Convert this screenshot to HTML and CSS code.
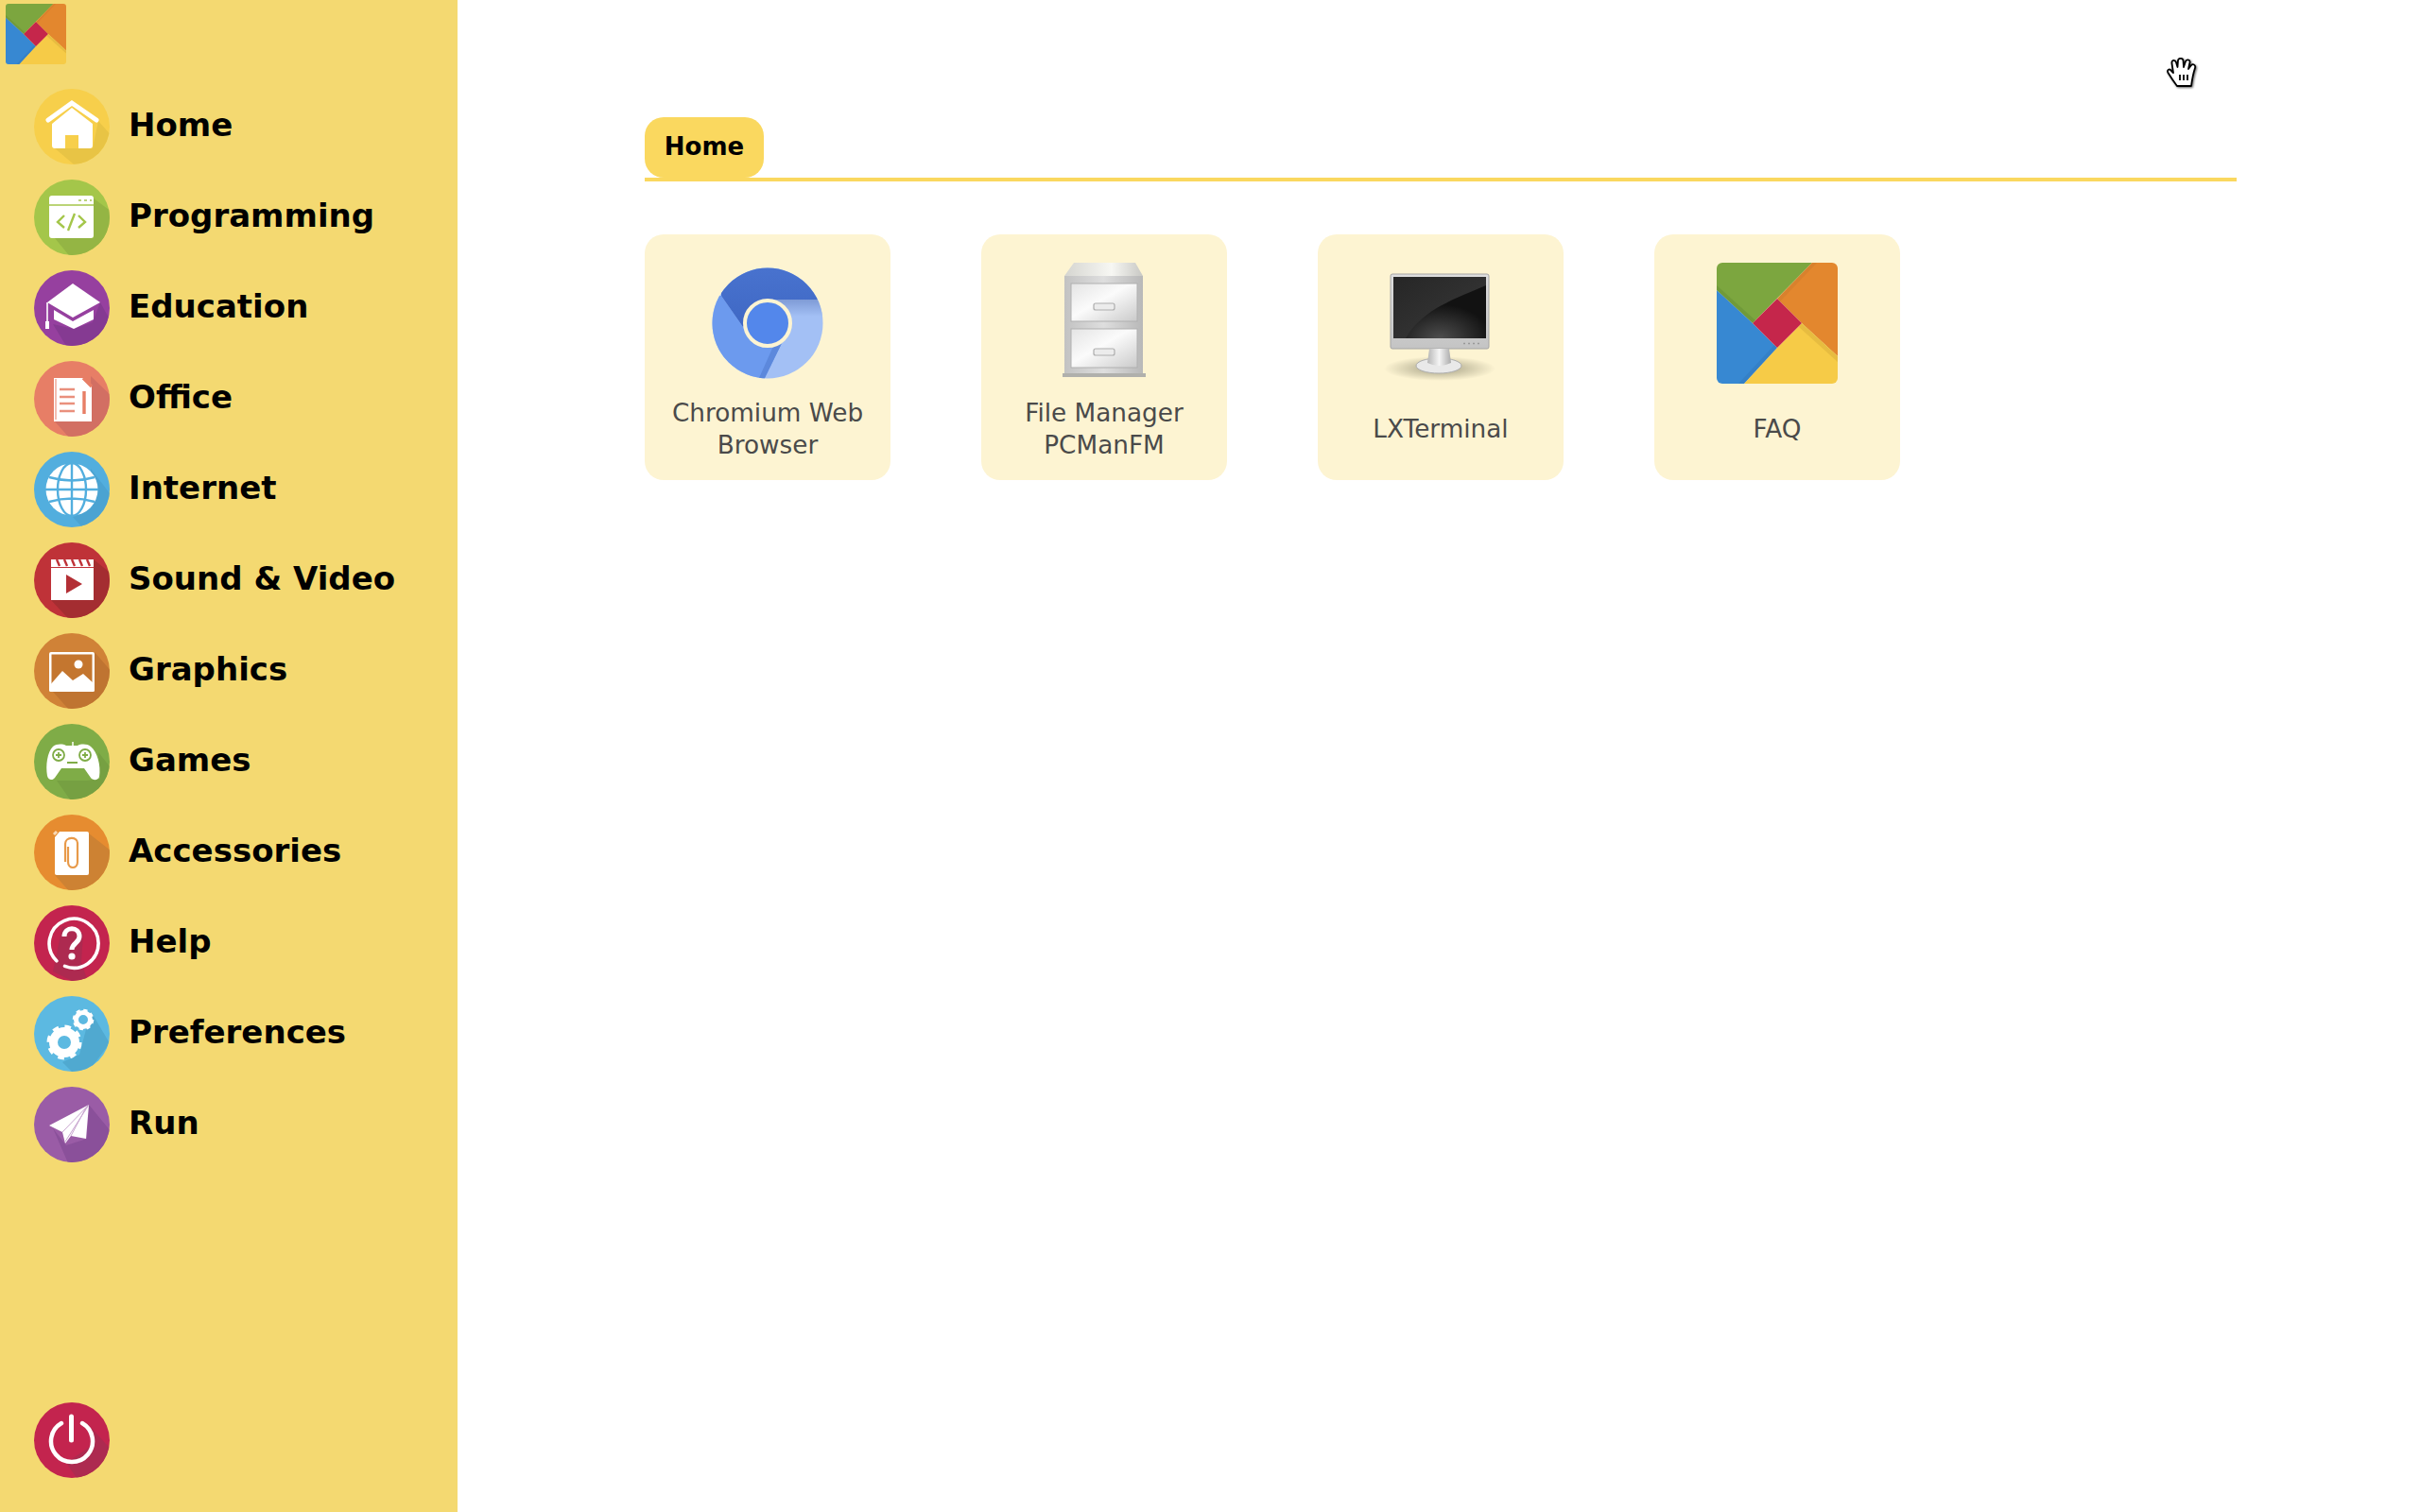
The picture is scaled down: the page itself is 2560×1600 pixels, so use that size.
FILE: index.html
```html
<!DOCTYPE html>
<html lang="en">
<head>
  <meta charset="UTF-8">
  <title>Menu</title>
  <link rel="stylesheet" href="styles.css">
</head>
<body>
  <aside class="sidebar">
    <svg class="logo" viewBox="0 0 128 128">
      <defs>
        <clipPath id="disc"><circle cx="40" cy="40" r="40"/></clipPath>
        <clipPath id="tile"><rect width="128" height="128" rx="6"/></clipPath>
        <clipPath id="round"><circle cx="64" cy="64" r="58.5"/></clipPath>
        <g id="tiles" clip-path="url(#tile)">
          <polygon points="0,0 101,0 38,64 0,29" fill="#7ca63f"/>
          <polygon points="101,0 128,0 128,99 90,64 64,38" fill="#e3872e"/>
          <polygon points="0,29 38,64 64,90 29,128 0,128" fill="#3788d2"/>
          <polygon points="29,128 64,90 90,64 128,99 128,128" fill="#f6cb47"/>
          <polygon points="64,38 90,64 64,90 38,64" fill="#c5264b"/>
          <polygon points="0,29 38,64 41,61 0,24" fill="#5f8a35" opacity=".4"/>
          <polygon points="64,38 101,0 106,0 67,41" fill="#c9792c" opacity=".4"/>
          <polygon points="64,90 29,128 23,128 61,87" fill="#2f76b6" opacity=".4"/>
          <polygon points="90,64 128,99 128,105 87,68" fill="#d8ad3a" opacity=".5"/>
        </g>
      </defs>
      <use href="#tiles"/>
    </svg>

    <nav class="menu">
      <a class="menu-item">
        <svg class="disc" viewBox="0 0 80 80">
          <circle cx="40" cy="40" r="40" fill="#f7cf4b"/>
          <polygon points="68,34 62,63 22,63 54,90 100,70" fill="#e8c445" clip-path="url(#disc)"/>
          <path d="M40 20 L62 37 V60 Q62 63 59 63 H47 V49 H33 V63 H22 Q19 63 19 60 V37 Z" fill="#fff"/>
          <path d="M15 33 L40 15 L66 33" fill="none" stroke="#fff" stroke-width="5" stroke-linecap="round"/>
        </svg>
        <span>Home</span>
      </a>
      <a class="menu-item">
        <svg class="disc" viewBox="0 0 80 80">
          <circle cx="40" cy="40" r="40" fill="#a4c64a"/>
          <polygon points="63,20 63,62 22,62 45,90 100,70 90,40" fill="#94b544" clip-path="url(#disc)"/>
          <rect x="16" y="17" width="47" height="45" rx="3" fill="#fff"/>
          <path d="M16 27 H63" stroke="#a4c64a" stroke-width="1.5"/>
          <path d="M47 22 H50 M53 22 H56 M59 22 H61" stroke="#bcd37e" stroke-width="2"/>
          <path d="M32 38 L25 45 L32 51 M47 38 L54 45 L47 51 M43 36 L36 54" fill="none" stroke="#a4c64a" stroke-width="2.4"/>
        </svg>
        <span>Programming</span>
      </a>
      <a class="menu-item">
        <svg class="disc" viewBox="0 0 80 80">
          <circle cx="40" cy="40" r="40" fill="#96409f"/>
          <polygon points="70,34 62,55 42,62 20,57 40,90 90,70" fill="#853a92" clip-path="url(#disc)"/>
          <polygon points="41,14 70,34 41,50 14,34" fill="#fff"/>
          <polygon points="21,42 41,54 63,42 63,52 42,62 21,52" fill="#fff"/>
          <path d="M14 34 V56" stroke="#fff" stroke-width="1.6"/>
          <rect x="12" y="54" width="4" height="8" fill="#fff"/>
        </svg>
        <span>Education</span>
      </a>
      <a class="menu-item">
        <svg class="disc" viewBox="0 0 80 80">
          <circle cx="40" cy="40" r="40" fill="#e77e66"/>
          <polygon points="60,16 61,64 22,64 45,90 100,70 90,45" fill="#d26f63" clip-path="url(#disc)"/>
          <path d="M21 18 H52 L61 27 V64 H21 Z" fill="#fff"/>
          <path d="M23 19 V62" stroke="#e77e66" stroke-width="1"/>
          <path d="M27 30 H43 M27 38 H43 M27 45 H43 M27 53 H43" stroke="#e9907d" stroke-width="2.6"/>
          <path d="M52 18 L61 27 M53 56 V32" stroke="#e77e66" stroke-width="3.4"/>
        </svg>
        <span>Office</span>
      </a>
      <a class="menu-item">
        <svg class="disc" viewBox="0 0 80 80">
          <circle cx="40" cy="40" r="40" fill="#52aede"/>
          <polygon points="60,18 62,58 40,68 60,90 100,70" fill="#4ba3d2" clip-path="url(#disc)"/>
          <circle cx="40" cy="40" r="27.5" fill="#fff"/>
          <g fill="none" stroke="#52aede" stroke-width="2.4">
            <ellipse cx="40" cy="40" rx="15" ry="28"/>
            <path d="M40 12 V68 M12 40 H68 M16 27 Q40 34 64 27 M16 53 Q40 46 64 53"/>
          </g>
        </svg>
        <span>Internet</span>
      </a>
      <a class="menu-item">
        <svg class="disc" viewBox="0 0 80 80">
          <circle cx="40" cy="40" r="40" fill="#bf3238"/>
          <polygon points="63,18 63,61 18,61 45,90 100,70 90,40" fill="#a42d31" clip-path="url(#disc)"/>
          <rect x="18" y="18" width="45" height="43" fill="#fff"/>
          <path d="M18 26.5 H63" stroke="#bf3238" stroke-width="1.2"/>
          <path d="M24 18 L27 25 M32 18 L35 25 M40 18 L43 25 M48 18 L51 25 M56 18 L59 25" stroke="#bf3238" stroke-width="2.4"/>
          <polygon points="34,34 51,44 34,54" fill="#b32f35"/>
        </svg>
        <span>Sound &amp; Video</span>
      </a>
      <a class="menu-item">
        <svg class="disc" viewBox="0 0 80 80">
          <circle cx="40" cy="40" r="40" fill="#d08237"/>
          <polygon points="64,20 64,62 20,62 45,90 100,70 90,50" fill="#bf7431" clip-path="url(#disc)"/>
          <rect x="16" y="20" width="48" height="42" rx="2" fill="#fff"/>
          <rect x="18.5" y="22.5" width="43" height="37" fill="#c4762f"/>
          <path d="M16 56 L30 40 L41 50 L52 43 L64 54 V60 Q64 62 62 62 H18 Q16 62 16 60 Z" fill="#fff"/>
          <circle cx="47" cy="33" r="4.5" fill="#fff"/>
        </svg>
        <span>Graphics</span>
      </a>
      <a class="menu-item">
        <svg class="disc" viewBox="0 0 80 80">
          <circle cx="40" cy="40" r="40" fill="#7fac47"/>
          <polygon points="68,30 70,58 56,60 24,60 45,90 100,70" fill="#76a042" clip-path="url(#disc)"/>
          <path d="M14 55 C12 44 14 30 20 24 C24 21 30 21 34 23 H46 C50 21 56 21 60 24 C67 30 71 44 69 56 C68 60 62 60 60 57 L53 47 H29 L22 57 C20 60 15 60 14 55 Z" fill="#fff"/>
          <path d="M41 19 V24" stroke="#fff" stroke-width="1.5"/>
          <g fill="none" stroke="#7fac47" stroke-width="1.8">
            <circle cx="26" cy="33" r="6"/>
            <circle cx="54" cy="33" r="6"/>
            <path d="M23 33 H29 M26 30 V36 M51 33 H57 M54 30 V36 M35 41 H46"/>
          </g>
        </svg>
        <span>Games</span>
      </a>
      <a class="menu-item">
        <svg class="disc" viewBox="0 0 80 80">
          <circle cx="40" cy="40" r="40" fill="#e68c30"/>
          <polygon points="58,20 58,64 22,64 45,90 100,70 90,45" fill="#cd8233" clip-path="url(#disc)"/>
          <path d="M27 18 H56 Q58 18 58 20 V62 Q58 64 56 64 H24 Q22 64 22 62 V24 Z" fill="#fff"/>
          <path d="M21 21 L24 18" stroke="#f8d9b5" stroke-width="3"/>
          <path d="M36 34 V50 C36 58 46 58 46 50 V30 C46 23 33 23 33 31 V50" fill="none" stroke="#e89a4a" stroke-width="2.2"/>
        </svg>
        <span>Accessories</span>
      </a>
      <a class="menu-item">
        <svg class="disc" viewBox="0 0 80 80">
          <circle cx="40" cy="40" r="40" fill="#c3244e"/>
          <polygon points="30,22 52,30 50,60 60,90 20,70" fill="#ad2a50" clip-path="url(#disc)"/>
          <path d="M22 57 A26 26 0 1 1 30 63.5" fill="none" stroke="#fff" stroke-width="3.6" stroke-linecap="round" transform="rotate(-6 40 40)"/>
          <path d="M32 33 C32 22 48 22 48 33 C48 40 40 40 40 47" fill="none" stroke="#fff" stroke-width="5"/>
          <circle cx="40" cy="54" r="3.6" fill="#fff"/>
        </svg>
        <span>Help</span>
      </a>
      <a class="menu-item">
        <svg class="disc" viewBox="0 0 80 80">
          <circle cx="40" cy="40" r="40" fill="#5cb9e1"/>
          <polygon points="60,16 80,50 50,90 30,70 48,62" fill="#50a9d0" clip-path="url(#disc)"/>
          <circle cx="32" cy="49" r="11.5" fill="none" stroke="#fff" stroke-width="9"/>
          <circle cx="32" cy="49" r="16.5" fill="none" stroke="#fff" stroke-width="4" stroke-dasharray="6.5 6.45"/>
          <circle cx="52" cy="25" r="7.5" fill="none" stroke="#fff" stroke-width="5"/>
          <circle cx="52" cy="25" r="10" fill="none" stroke="#fff" stroke-width="2.6" stroke-dasharray="4.2 3.65"/>
        </svg>
        <span>Preferences</span>
      </a>
      <a class="menu-item">
        <svg class="disc" viewBox="0 0 80 80">
          <circle cx="40" cy="40" r="40" fill="#9a5ca6"/>
          <polygon points="58,19 56,55 34,62 20,44 40,90 100,70" fill="#8a509a" clip-path="url(#disc)"/>
          <polygon points="58,19 16,41 30,48 33,60 39,52 55,55" fill="#fff"/>
          <path d="M58 19 L30 48 M58 19 L33 58 M55 22 L39 52" stroke="#c9a6d0" stroke-width="1"/>
        </svg>
        <span>Run</span>
      </a>
    </nav>

    <a class="power">
      <svg class="disc" viewBox="0 0 80 80">
        <circle cx="40" cy="40" r="40" fill="#c3244e"/>
        <polygon points="56,22 62,45 34,64 52,90 100,70" fill="#ad2a50" clip-path="url(#disc)"/>
        <path d="M29 22 A22 22 0 1 0 51 22" fill="none" stroke="#fff" stroke-width="4.5" stroke-linecap="round"/>
        <path d="M39.500 15 V40" stroke="#fff" stroke-width="5" stroke-linecap="round"/>
      </svg>
    </a>
  </aside>

  <main class="content">
    <div class="tabs">
      <div class="tab">Home</div>
    </div>

    <div class="apps">
      <div class="app">
        <svg class="app-icon" viewBox="0 0 128 128">
          <defs>
            <linearGradient id="topBlue" x1="0" y1="0" x2="0" y2="1">
              <stop offset="0" stop-color="#4a74d0"/>
              <stop offset="1" stop-color="#3f68c4"/>
            </linearGradient>
            <linearGradient id="edgeRight" x1="0" y1="0" x2="0" y2="1">
              <stop offset="0" stop-color="#7f9bd6"/>
              <stop offset="1" stop-color="#a3c0f5"/>
            </linearGradient>
          </defs>
          <g clip-path="url(#round)">
            <rect width="128" height="128" fill="#a3c0f5"/>
            <rect x="64" y="39" width="64" height="18" fill="url(#edgeRight)"/>
            <polygon points="38,68 15,35 -10,35 -10,140 61,140 61,122 84,75" fill="#6c9aee"/>
            <polygon points="61,122 84,75 76,75 55,122" fill="#5c88dc"/>
            <polygon points="15,35 38,68 64,39 130,39 130,-5 15,-5" fill="url(#topBlue)"/>
          </g>
          <circle cx="64" cy="64" r="24" fill="#5387eb" stroke="#fdf4d2" stroke-width="4"/>
        </svg>
        <div class="app-label">Chromium Web Browser</div>
      </div>

      <div class="app">
        <svg class="app-icon" viewBox="0 0 128 128">
          <defs>
            <linearGradient id="steel" x1="0" y1="0" x2="1" y2="0">
              <stop offset="0" stop-color="#c2c2c2"/>
              <stop offset=".5" stop-color="#dedede"/>
              <stop offset="1" stop-color="#b8b8b8"/>
            </linearGradient>
            <linearGradient id="drawer" x1="0" y1="0" x2="1" y2="1">
              <stop offset="0" stop-color="#e4e4e4"/>
              <stop offset=".45" stop-color="#fbfbfb"/>
              <stop offset="1" stop-color="#cacaca"/>
            </linearGradient>
            <linearGradient id="lid" x1="0" y1="0" x2="1" y2="0">
              <stop offset="0" stop-color="#d5d5d0"/>
              <stop offset=".6" stop-color="#f7f7f3"/>
              <stop offset="1" stop-color="#c8c8c4"/>
            </linearGradient>
          </defs>
          <polygon points="32,0 97,0 105,14 22,14" fill="url(#lid)"/>
          <rect x="22" y="14" width="83" height="105" fill="url(#steel)"/>
          <rect x="20" y="117" width="88" height="4" fill="#b0b0ac"/>
          <rect x="29" y="22" width="70" height="40" fill="url(#drawer)" stroke="#b0b0b0"/>
          <rect x="29" y="70" width="70" height="41" fill="url(#drawer)" stroke="#b0b0b0"/>
          <rect x="53" y="43" width="22" height="7" rx="2" fill="#ececec" stroke="#adadad" stroke-width="1.2"/>
          <rect x="53" y="91" width="22" height="7" rx="2" fill="#ececec" stroke="#adadad" stroke-width="1.2"/>
        </svg>
        <div class="app-label">File Manager PCManFM</div>
      </div>

      <div class="app">
        <svg class="app-icon" viewBox="0 0 128 128">
          <defs>
            <radialGradient id="floor">
              <stop offset="0" stop-color="#8e8a70" stop-opacity=".8"/>
              <stop offset="1" stop-color="#8e8a70" stop-opacity="0"/>
            </radialGradient>
            <radialGradient id="glow" cx=".5" cy="1" r=".55">
              <stop offset="0" stop-color="#4e4e4e"/>
              <stop offset="1" stop-color="#121212"/>
            </radialGradient>
            <linearGradient id="gloss" x1="0" y1="0" x2="1" y2="1">
              <stop offset="0" stop-color="#262626"/>
              <stop offset="1" stop-color="#3a3a3a"/>
            </linearGradient>
            <linearGradient id="bezel" x1="0" y1="0" x2="0" y2="1">
              <stop offset="0" stop-color="#dedede"/>
              <stop offset="1" stop-color="#c4c4c4"/>
            </linearGradient>
            <linearGradient id="neck" x1="0" y1="0" x2="1" y2="0">
              <stop offset="0" stop-color="#b5b5b5"/>
              <stop offset=".5" stop-color="#f5f5f5"/>
              <stop offset="1" stop-color="#aaaaaa"/>
            </linearGradient>
          </defs>
          <ellipse cx="63" cy="112" rx="59" ry="13" fill="url(#floor)"/>
          <rect x="11" y="12" width="104" height="79" rx="2" fill="url(#bezel)" stroke="#a5a5a5"/>
          <rect x="14" y="15" width="98" height="65" fill="url(#glow)"/>
          <path d="M14 15 H112 V24 C85 36 45 48 27 80 H14 Z" fill="url(#gloss)"/>
          <ellipse cx="62" cy="109" rx="24" ry="8" fill="#e9e9e9" stroke="#adadad"/>
          <path d="M52 91 H73 L75 106 Q62 112 50 106 Z" fill="url(#neck)"/>
          <path d="M88 85.500 H108" stroke="#989898" stroke-width="1.6" stroke-dasharray="2 3"/>
        </svg>
        <div class="app-label">LXTerminal</div>
      </div>

      <div class="app">
        <svg class="app-icon" viewBox="0 0 128 128"><use href="#tiles"/></svg>
        <div class="app-label">FAQ</div>
      </div>
    </div>
  </main>

  <!-- pointer sitting over the page in the screenshot -->
  <svg class="cursor" viewBox="0 0 32 32">
    <path d="M11 30 C8 26 4 20 1.500 16 C0 13 3 11 5 14 L7 16 L5.500 6 C5 2 9 2 10 5 L11.500 10 L12 3 C12.500 0 17 0 17.500 3 L18 10 L20 4 C21 1.500 25 2 24.500 5 L23 12 L26 8 C28 6 31 8 30 11 C28 17 27 22 26 30 Z" fill="#fff" stroke="#000" stroke-width="1.800" stroke-linejoin="round"/>
    <path d="M14 18 V24 M18 18 V24 M22 18 V24" stroke="#000" stroke-width="1.800"/>
  </svg>
</body>
</html>
```

FILE: styles.css
```css
/* General Styling */
html, body {
  height: 100%;
}

body {
  margin: 0;
  display: flex;
  background: #fff;
  font-family: "DejaVu Sans", sans-serif;
  color: #000;
}

/* Sidebar */
.sidebar {
  width: 484px;
  height: 1600px;
  box-sizing: border-box;
  padding-top: 4px;
  padding-bottom: 36px;
  background: #f4d971;
  display: flex;
  flex-direction: column;
}

.logo {
  width: 64px;
  height: 64px;
  margin-left: 6px;
}

.menu {
  margin-top: 26px;
  display: flex;
  flex-direction: column;
  gap: 16px;
}

.menu-item {
  display: flex;
  align-items: center;
  gap: 20px;
  padding-left: 36px;
  font-size: 34px;
  font-weight: bold;
}

.menu-item span {
  margin-bottom: 5px;
}

.disc {
  width: 80px;
  height: 80px;
  flex: none;
}

.power {
  margin-top: auto;
  padding-left: 36px;
  height: 80px;
}

/* Main area */
.content {
  flex: 1;
  padding: 124px 194px 0 198px;
}

.tabs {
  display: flex;
  border-bottom: 4px solid #fad85f;
  margin-bottom: 56px;
}

.tab {
  width: 126px;
  height: 64px;
  line-height: 63px;
  text-align: center;
  background: #fad85f;
  border-radius: 20px;
  font-size: 26px;
  font-weight: bold;
}

/* App cards */
.apps {
  display: flex;
  gap: 96px;
}

.app {
  width: 260px;
  height: 260px;
  box-sizing: border-box;
  padding: 30px 10px 6px;
  background: #fdf4d2;
  border-radius: 20px;
  display: flex;
  flex-direction: column;
  align-items: center;
}

.app-icon {
  width: 128px;
  height: 128px;
  flex: none;
}

.app-label {
  flex: 1;
  display: flex;
  align-items: center;
  text-align: center;
  font-size: 26.3px;
  line-height: 34px;
  color: #4a4a4a;
}

/* Cursor */
.cursor {
  position: absolute;
  left: 2292px;
  top: 61px;
  width: 32px;
  height: 32px;
  filter: drop-shadow(1px 1px 1px rgba(0, 0, 0, 0.6));
}
```
